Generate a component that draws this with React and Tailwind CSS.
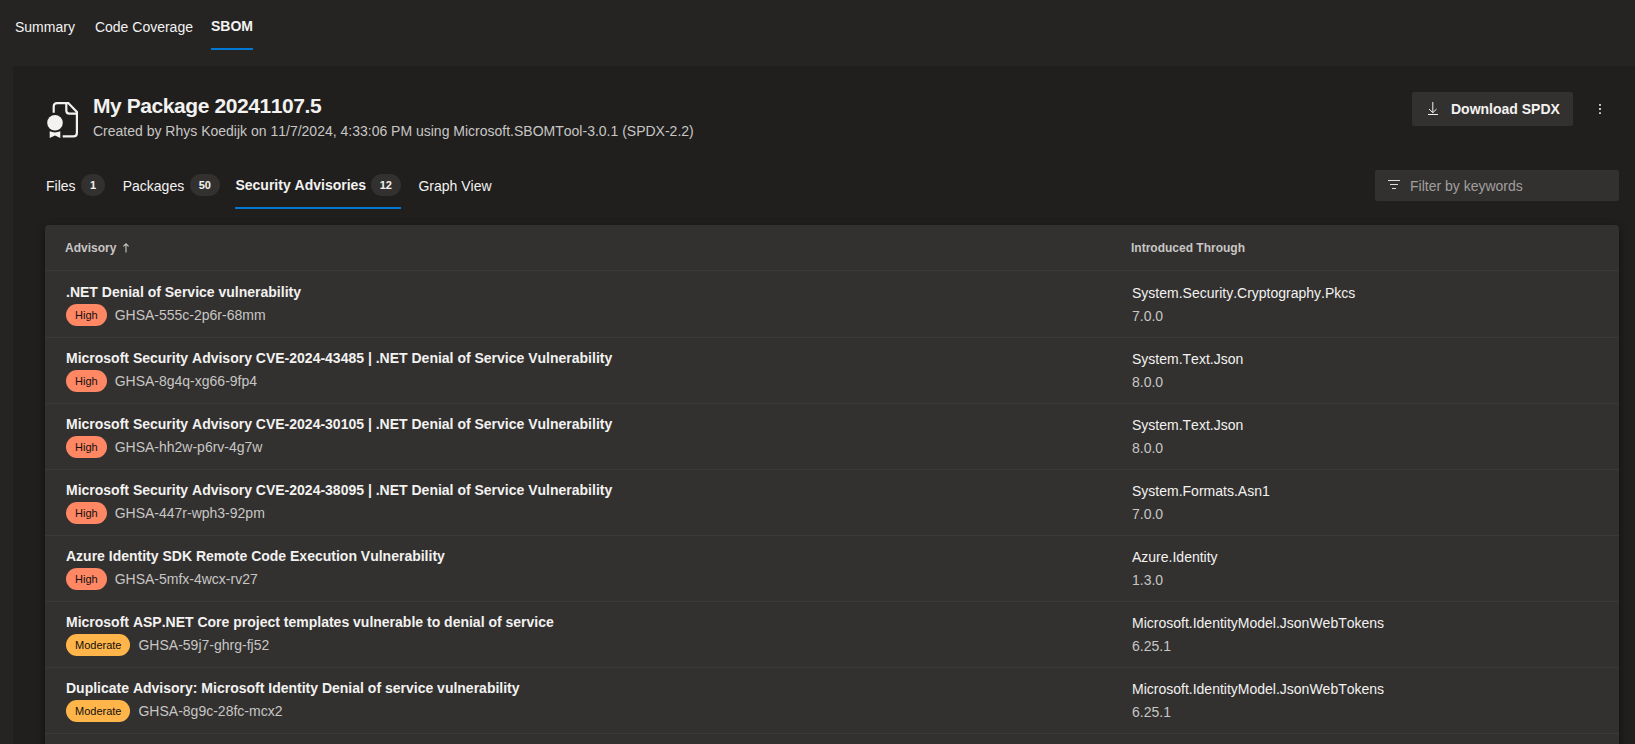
import React from "react";

const advisories = [
  [".NET Denial of Service vulnerability", "High", "GHSA-555c-2p6r-68mm", "System.Security.Cryptography.Pkcs", "7.0.0"],
  ["Microsoft Security Advisory CVE-2024-43485 | .NET Denial of Service Vulnerability", "High", "GHSA-8g4q-xg66-9fp4", "System.Text.Json", "8.0.0"],
  ["Microsoft Security Advisory CVE-2024-30105 | .NET Denial of Service Vulnerability", "High", "GHSA-hh2w-p6rv-4g7w", "System.Text.Json", "8.0.0"],
  ["Microsoft Security Advisory CVE-2024-38095 | .NET Denial of Service Vulnerability", "High", "GHSA-447r-wph3-92pm", "System.Formats.Asn1", "7.0.0"],
  ["Azure Identity SDK Remote Code Execution Vulnerability", "High", "GHSA-5mfx-4wcx-rv27", "Azure.Identity", "1.3.0"],
  ["Microsoft ASP.NET Core project templates vulnerable to denial of service", "Moderate", "GHSA-59j7-ghrg-fj52", "Microsoft.IdentityModel.JsonWebTokens", "6.25.1"],
  ["Duplicate Advisory: Microsoft Identity Denial of service vulnerability", "Moderate", "GHSA-8g9c-28fc-mcx2", "Microsoft.IdentityModel.JsonWebTokens", "6.25.1"],
];

function Count({ children }) {
  return (
    <span className="flex h-[22px] items-center rounded-full bg-[#323130] px-[9px] text-[11px] font-bold text-[#f3f2f1]">
      {children}
    </span>
  );
}

function CertificateIcon() {
  return (
    <svg width="32" height="38" viewBox="0 0 32 38" fill="none">
      <path
        d="M6.7 11.7V5.5Q6.7 2.1 10.1 2.1H21.3L29.9 11V31.9Q29.9 35.4 26.4 35.4H15.7"
        stroke="#f3f2f1"
        strokeWidth="2.2"
      />
      <path d="M19.3 2.1V9.6Q19.3 12.7 22.4 12.7H29.9" stroke="#f3f2f1" strokeWidth="2.2" />
      <circle cx="8" cy="21.7" r="7.8" fill="#f3f2f1" />
      <path d="M2.7 30.3Q8 32.6 13.3 30.3V37L8 34.6L2.7 37Z" fill="#f3f2f1" />
    </svg>
  );
}

function DownloadIcon() {
  return (
    <svg width="12" height="14" viewBox="0 0 12 14" fill="none" stroke="#f3f2f1">
      <path d="M4.8 0V10.5M1 7L4.8 10.7L8.6 7M0 12.5H10" />
    </svg>
  );
}

function FilterIcon() {
  return (
    <svg className="mb-px" width="12" height="10" viewBox="0 0 12 10" fill="none" stroke="#e1dfdd">
      <path d="M0 0.5H12M2 4.5H10M4 8.5H8" />
    </svg>
  );
}

function MoreIcon() {
  return (
    <svg width="2" height="10" viewBox="0 0 2 10" fill="#f3f2f1">
      <path d="M0.2 0H1.8V1.8H0.2ZM0.2 4.1H1.8V5.9H0.2ZM0.2 8.2H1.8V10H0.2Z" />
    </svg>
  );
}

function SortIcon() {
  return (
    <svg width="7" height="10" viewBox="0 0 7 10" fill="none" stroke="#c8c6c4">
      <path d="M3 9.5V0.8M0.4 3.4L3 0.8L5.6 3.4" strokeWidth="1.1" />
    </svg>
  );
}

export default function App() {
  return (
    <div className="flex h-[744px] flex-col overflow-hidden bg-[#252423] pl-[13px] font-['Liberation_Sans',Arial,sans-serif] text-sm leading-5 text-[#f3f2f1] [font-kerning:none]">
      <nav className="flex h-[66px] shrink-0 gap-5 pl-0.5">
        <div className="h-[50px] pt-[17px]">Summary</div>
        <div className="h-[50px] pt-[17px]">Code Coverage</div>
        <div className="-ml-0.5 h-[50px] border-b-2 border-[#0078d4] pt-4 font-bold">SBOM</div>
      </nav>

      <main className="min-h-0 flex-1 bg-[#201f1e] pl-8">
        <header className="flex h-[100px] pt-[26px] pr-4">
          <div className="w-12 pt-[9px] pl-0.5">
            <CertificateIcon />
          </div>
          <div className="flex-1">
            <h1 className="text-[21px] leading-7 font-bold tracking-[-0.02em]">My Package 20241107.5</h1>
            <p className="pt-px leading-5 text-[#c8c6c4]">
              Created by Rhys Koedijk on 11/7/2024, 4:33:06 PM using Microsoft.SBOMTool-3.0.1 (SPDX-2.2)
            </p>
          </div>
          <button className="flex h-[34px] w-[161px] items-center rounded-xs bg-[#323130] pl-4 font-bold">
            <DownloadIcon />
            <span className="ml-[11px]">Download SPDX</span>
          </button>
          <button className="ml-[26px] flex h-[34px] w-[20px] items-center">
            <MoreIcon />
          </button>
        </header>

        <div className="flex h-[59px] justify-between pr-4">
          <div className="flex gap-[17.5px] pl-px">
            <div className="flex h-[43px] items-start gap-[5.5px] pt-2">
              <span className="pt-[2px]">Files</span>
              <Count>1</Count>
            </div>
            <div className="flex h-[43px] items-start gap-[5.5px] pt-2">
              <span className="pt-[2px]">Packages</span>
              <Count>50</Count>
            </div>
            <div className="-ml-0.5 flex h-[43px] items-start gap-[4.5px] border-b-2 border-[#0078d4] pt-2 font-bold">
              <span className="pt-px">Security Advisories</span>
              <Count>12</Count>
            </div>
            <div className="pt-[10px]">Graph View</div>
          </div>
          <div className="mt-1 flex h-[31px] w-[244px] items-center rounded-xs bg-[#323130] pl-[13px] text-[#a19f9d]">
            <FilterIcon />
            <span className="ml-[10px]">Filter by keywords</span>
          </div>
        </div>

        <section className="mr-4 h-[600px] rounded-t bg-[#323130] shadow-[0_3px_8px_rgba(0,0,0,0.5)]">
          <div className="flex h-[46px] border-b border-[#3b3a39] pt-[13px] pl-5 text-xs leading-5 font-bold text-[#c8c6c4]">
            <div className="flex w-[1066px] gap-[7px]">
              <span>Advisory</span>
              <span className="pt-[5px]">
                <SortIcon />
              </span>
            </div>
            <div>Introduced Through</div>
          </div>
          {advisories.map(([title, severity, id, pkg, version], i) => (
            <div
              key={id}
              className={`flex border-b border-[#3b3a39] pl-[21px] ${i === 0 ? "h-[67px] pt-[11px]" : "h-[66px] pt-[10px]"}`}
            >
              <div className="w-[1066px]">
                <div className="font-bold">{title}</div>
                <div className="mt-[2px] flex items-center gap-2">
                  <span
                    className={`flex h-[22px] items-center rounded-full px-[9px] text-[11px] text-[#11100f] ${
                      severity === "High" ? "bg-[#ff8764]" : "bg-[#ffb54a]"
                    }`}
                  >
                    {severity}
                  </span>
                  <span className="text-[#c8c6c4]">{id}</span>
                </div>
              </div>
              <div className="pt-px">
                <div>{pkg}</div>
                <div className="mt-[3px] text-[#c8c6c4]">{version}</div>
              </div>
            </div>
          ))}
        </section>
      </main>
    </div>
  );
}
